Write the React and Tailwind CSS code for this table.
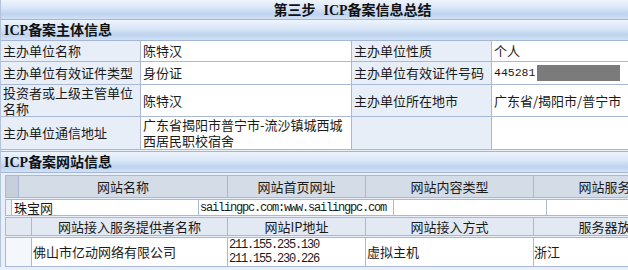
import React from 'react';

const cjk = "font-['Noto_Sans_CJK_SC','Liberation_Sans',sans-serif]";
const mono = "font-['Liberation_Mono',monospace] text-[12px] tracking-[-1.2px]";
const bar =
  'bg-[linear-gradient(to_bottom,#eef4fc_0%,#dae7f8_40%,#bdd3ef_75%,#d3e2f5_100%)]';

function HeadText({ children }) {
  return (
    <span className="font-bold text-[14px] text-[#111] whitespace-nowrap">
      {children}
    </span>
  );
}

function Icp() {
  return <span className="font-['Liberation_Serif',serif] font-bold">ICP</span>;
}

function Label({ children, className = '' }) {
  return (
    <div className={`bg-[#e8eef7] px-[2px] flex items-center leading-[16px] ${className}`}>
      {children}
    </div>
  );
}

function Value({ children, className = '' }) {
  return (
    <div className={`bg-white px-[2px] flex items-center leading-[16px] ${className}`}>
      {children}
    </div>
  );
}

export default function App() {
  return (
    <div className={`w-[628px] h-[270px] overflow-hidden bg-[#e9eff8] text-[13px] text-[#1a1a1a] ${cjk}`}>
      <div className="w-[704px] border-l border-[#b4c3dc]">
        {/* title */}
        <div className={`h-[20px] ${bar} border-b border-[#a3b6d6] flex items-center justify-center`}>
          <HeadText>
            第三步<span className="inline-block w-[8px]" /><Icp />备案信息总结
          </HeadText>
        </div>

        {/* section 1 */}
        <div className={`h-[21px] ${bar} border-b border-[#a3b6d6] flex items-center pl-[3px]`}>
          <HeadText>
            <Icp />备案主体信息
          </HeadText>
        </div>

        <div className="grid grid-cols-[139px_210px_139px_213px] grid-rows-[20px_22px_31px_32px] gap-px bg-[#a9b9d5] border-b border-[#a9b9d5]">
          <Label>主办单位名称</Label>
          <Value>陈特汉</Value>
          <Label>主办单位性质</Label>
          <Value>个人</Value>

          <Label>主办单位有效证件类型</Label>
          <Value>身份证</Value>
          <Label>主办单位有效证件号码</Label>
          <Value>
            <span className="font-['Liberation_Mono',monospace] text-[11.5px]">445281</span>
            <span className="ml-[2px] w-[83px] h-[16px] bg-[#7b7b7b]" />
          </Value>

          <Label>投资者或上级主管单位名称</Label>
          <Value>陈特汉</Value>
          <Label>主办单位所在地市</Label>
          <Value>广东省/揭阳市/普宁市</Value>

          <Label>主办单位通信地址</Label>
          <Value>广东省揭阳市普宁市-流沙镇城西城西居民职校宿舍</Value>
          <Label />
          <Value />
        </div>

        {/* section 2 */}
        <div className={`mt-px h-[22px] ${bar} border-y border-[#a3b6d6] flex items-center pl-[3px]`}>
          <HeadText>
            <Icp />备案网站信息
          </HeadText>
        </div>

        <div className="pt-[2px] pl-[4px] flex flex-col gap-px">
          {/* header row 1 */}
          <div className="flex h-[23px] border border-[#a9b9d5] bg-[#d4dce7] whitespace-nowrap">
            <div className="w-[12px] shrink-0 bg-[#c6cfdb]" />
            <div className="w-[209px] shrink-0 border-l border-[#a9b9d5] flex items-center justify-center">网站名称</div>
            <div className="w-[138px] shrink-0 border-l border-[#a9b9d5] flex items-center justify-center">网站首页网址</div>
            <div className="w-[168px] shrink-0 border-l border-[#a9b9d5] flex items-center justify-center">网站内容类型</div>
            <div className="w-[168px] shrink-0 border-l border-[#a9b9d5] flex items-center justify-center">网站服务内容</div>
          </div>

          {/* data row 1 */}
          <div className="flex h-[17px] border border-[#a9b9d5] bg-white whitespace-nowrap">
            <div className="w-[5px] shrink-0 bg-[#eef2f8]" />
            <div className="w-[187px] shrink-0 border-l border-[#a9b9d5] flex items-center pl-[2px] leading-[15px]">珠宝网</div>
            <div className={`w-[195px] shrink-0 border-l border-[#a9b9d5] flex items-center pl-[1px] ${mono}`}>
              sailingpc.com:www.sailingpc.com
            </div>
            <div className="w-[153px] shrink-0 border-l border-[#a9b9d5]" />
            <div className="w-[160px] shrink-0 border-l border-[#a9b9d5]" />
          </div>

          {/* header row 2 */}
          <div className="flex h-[19px] border border-[#a9b9d5] bg-[#e2e9f3] whitespace-nowrap">
            <div className="w-[25px] shrink-0" />
            <div className="w-[196px] shrink-0 border-l border-[#a9b9d5] flex items-center justify-center">网站接入服务提供者名称</div>
            <div className="w-[138px] shrink-0 border-l border-[#a9b9d5] flex items-center justify-center">网站IP地址</div>
            <div className="w-[168px] shrink-0 border-l border-[#a9b9d5] flex items-center justify-center">网站接入方式</div>
            <div className="w-[181px] shrink-0 border-l border-[#a9b9d5] flex items-center justify-center">服务器放置地点</div>
          </div>

          {/* data row 2 */}
          <div className="flex h-[30px] border border-[#a9b9d5] bg-white whitespace-nowrap">
            <div className="w-[25px] shrink-0 bg-[#f4f7fb]" />
            <div className="w-[196px] shrink-0 border-l border-[#a9b9d5] flex items-center pl-[1px]">佛山市亿动网络有限公司</div>
            <div className={`w-[138px] shrink-0 border-l border-[#a9b9d5] flex flex-col justify-center pl-[1px] leading-[14px] ${mono}`}>
              <span>211.155.235.130</span>
              <span>211.155.230.226</span>
            </div>
            <div className="w-[168px] shrink-0 border-l border-[#a9b9d5] flex items-center pl-[1px]">虚拟主机</div>
            <div className="w-[181px] shrink-0 border-l border-[#a9b9d5] flex items-center">浙江</div>
          </div>
        </div>
      </div>
    </div>
  );
}
